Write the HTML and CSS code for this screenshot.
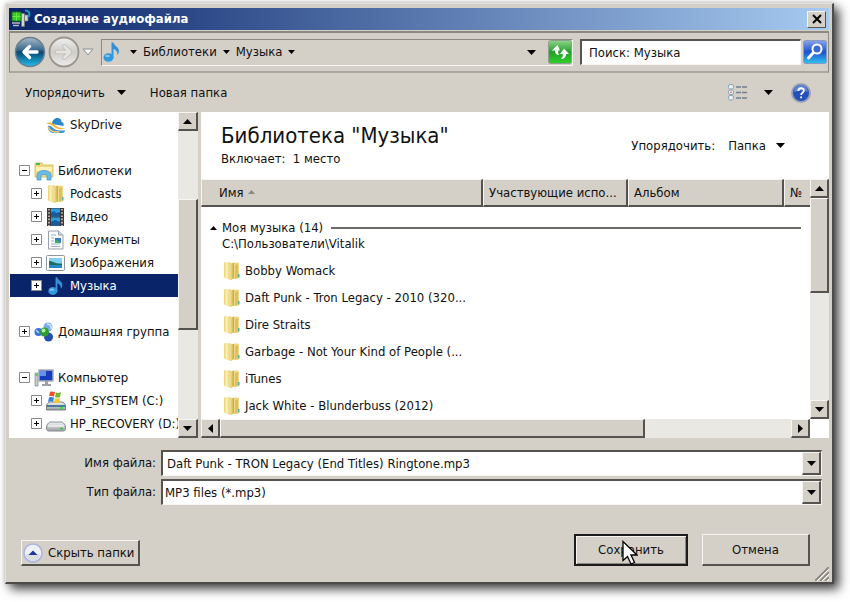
FILE: index.html
```html
<!DOCTYPE html>
<html lang="ru">
<head>
<meta charset="utf-8">
<meta name="viewport" content="width=device-width, initial-scale=1">
<title>Создание аудиофайла</title>
<link rel="stylesheet" href="styles.css">
</head>
<body>
<svg class="defs" aria-hidden="true">
  <defs>
    <linearGradient id="gold" x1="0" y1="0" x2="1" y2="0"><stop offset="0" stop-color="#e8d274"/><stop offset=".35" stop-color="#fbf0b4"/><stop offset="1" stop-color="#e6cd6c"/></linearGradient>
    <linearGradient id="goldFront" x1="0" y1="0" x2="1" y2="0"><stop offset="0" stop-color="#f6e69a"/><stop offset="1" stop-color="#c9a53e"/></linearGradient>
    <linearGradient id="note" x1="0" y1="0" x2="0" y2="1"><stop offset="0" stop-color="#3f86cc"/><stop offset="1" stop-color="#2aa0ea"/></linearGradient>
    <linearGradient id="backFill" x1="0" y1="0" x2="0" y2="1"><stop offset="0" stop-color="#a9bac8"/><stop offset=".42" stop-color="#3c6c90"/><stop offset=".5" stop-color="#0a4672"/><stop offset="1" stop-color="#20c0ee"/></linearGradient>
    <linearGradient id="fwdFill" x1="0" y1="0" x2="0" y2="1"><stop offset="0" stop-color="#efefed"/><stop offset=".5" stop-color="#cfcdc9"/><stop offset="1" stop-color="#eeedea"/></linearGradient>
    <linearGradient id="green" x1="0" y1="0" x2="0" y2="1"><stop offset="0" stop-color="#8fd48a"/><stop offset=".5" stop-color="#25a02c"/><stop offset="1" stop-color="#2fd02c"/></linearGradient>
    <linearGradient id="blue" x1="0" y1="0" x2="0" y2="1"><stop offset="0" stop-color="#8ba4ec"/><stop offset=".5" stop-color="#1d52cc"/><stop offset="1" stop-color="#30c4f4"/></linearGradient>
    <linearGradient id="metal" x1="0" y1="0" x2="0" y2="1"><stop offset="0" stop-color="#f4f4f4"/><stop offset="1" stop-color="#9a9fa3"/></linearGradient>
    <symbol id="i-folder" viewBox="0 0 18 20">
      <path d="M9 3.500c0-1.500 1-2 2-2h3.500c1 0 1.500.5 1.500 1.500v13c0 1.500-1 2-2 2H9z" fill="#efd986"/>
      <path d="M13.500 3c1 0 1.500.5 1.500 1.500V16l-3 2V5z" fill="#e0c05a"/>
      <path d="M1 3c0-1.500.5-2 2-2l5 .5V19l-5.500-1.500C1.500 17 1 16.500 1 15.500z" fill="url(#gold)"/>
      <path d="M7 4.500C7 3 8 2 9.500 2h1.500v14.500L8.500 19 7 18.500z" fill="url(#goldFront)"/>
      <path d="M15 13h1.500v3.500H15z" fill="#4bb6a2"/>
    </symbol>
    <symbol id="i-note" viewBox="0 0 20 22">
      <ellipse cx="6.500" cy="16.500" rx="5" ry="4.300" fill="url(#note)"/>
      <path d="M9.500 1.500h1.800c.5 3 5.700 4.500 5.700 8.500 0 1.800-.6 3-1.600 4 .2-3.500-1.400-5-3.900-6V17h-2z" fill="url(#note)"/>
      <ellipse cx="5.500" cy="15" rx="2.500" ry="1.300" fill="#7cc8f4"/>
    </symbol>
    <symbol id="i-plus" viewBox="0 0 11 11"><path d="M.5.5h10v10H.5z" fill="#fff" stroke="#8a8a8a"/><path d="M3 5.500h5M5.500 3v5" stroke="#000"/></symbol>
    <symbol id="i-minus" viewBox="0 0 11 11"><path d="M.5.5h10v10H.5z" fill="#fff" stroke="#8a8a8a"/><path d="M3 5.500h5" stroke="#000"/></symbol>
    <symbol id="i-down" viewBox="0 0 9 5"><path d="M0 0h9L4.500 5z"/></symbol>
    <symbol id="i-up" viewBox="0 0 9 5"><path d="M0 5h9L4.500 0z"/></symbol>
    <symbol id="i-left" viewBox="0 0 5 9"><path d="M5 0v9L0 4.500z"/></symbol>
    <symbol id="i-right" viewBox="0 0 5 9"><path d="M0 0v9l5-4.500z"/></symbol>
  </defs>
</svg>

<main class="window">
  <header class="titlebar">
    <svg class="app-icon" viewBox="0 0 20 20" aria-hidden="true"><path d="M1 3h9v9H1z" fill="#35d01f" stroke="#1b6d1a"/><path d="M5.500 3.500v8M1.500 7.500h8" stroke="#66ec48"/><path d="M1 14h8M2 16.500h6" stroke="#b8b8b8" stroke-width="1.600"/><path d="M10.500 4.500h3v13h-3zM13.500 6h3.500v6h-3.500z" fill="#d4d4d4" stroke="#777" stroke-width=".7"/><path d="M14 1.500c4 0 5.500 3 3.500 6.500" fill="none" stroke="#149ac0" stroke-width="2"/></svg>
    <h1>Создание аудиофайла</h1>
    <button class="close" type="button" aria-label="Закрыть"><svg viewBox="0 0 10 10"><path d="M1 1l8 8M9 1L1 9" stroke="#000" stroke-width="2"/></svg></button>
  </header>

  <nav class="navbar">
    <div class="travel">
      <button type="button" aria-label="Назад"><svg viewBox="0 0 32 32"><circle cx="16" cy="16" r="14.500" fill="url(#backFill)" stroke="#6d7f8e" stroke-width="1.500"/><path d="M23 16H10.500M15.500 10.500L10 16l5.500 5.500" fill="none" stroke="#fff" stroke-width="3.400" stroke-linecap="round" stroke-linejoin="round"/></svg></button>
      <button type="button" aria-label="Вперёд"><svg viewBox="0 0 32 32"><circle cx="16" cy="16" r="14.500" fill="url(#fwdFill)" stroke="#989690" stroke-width="1.800"/><g fill="none" stroke-linecap="round" stroke-linejoin="round"><path d="M9 16h12.500M16.500 10.500L22 16l-5.500 5.500" stroke="#bab8b3" stroke-width="4.400"/><path d="M9 16h12.500M16.500 10.500L22 16l-5.500 5.500" stroke="#e4e3df" stroke-width="3"/></g></svg></button>
      <button class="recent" type="button" aria-label="Последние страницы"><svg viewBox="0 0 12 8"><path d="M1 1h10L6 7z" fill="#f4f4f4" stroke="#8e8e98"/></svg></button>
    </div>
    <div class="address">
      <svg class="note" aria-hidden="true"><use href="#i-note"/></svg>
      <svg class="caret" aria-hidden="true"><use href="#i-down"/></svg>
      <a href="#libs">Библиотеки</a>
      <svg class="caret" aria-hidden="true"><use href="#i-down"/></svg>
      <a href="#music">Музыка</a>
      <svg class="caret" aria-hidden="true"><use href="#i-down"/></svg>
      <button class="history" type="button" aria-label="Предыдущие расположения"><svg class="caret-lg"><use href="#i-down"/></svg></button>
      <button class="square" type="button" aria-label="Обновить"><svg viewBox="0 0 24 24"><rect x=".5" y=".5" width="23" height="23" rx="2" fill="url(#green)" stroke="#8fa18c"/><path d="M9.500 5L4 10.500h3c0 3 1.500 4.500 4.500 4.500-1.500-1.500-1.500-3-1.300-4.500H12z" fill="#fff"/><path d="M16 8.500l5 5.500h-3c0 3.500-2 5-5 5 1.600-1.500 2-3 1.800-5H12z" fill="#fff"/></svg></button>
    </div>
    <form class="search">
      <input type="text" aria-label="Поиск" value="Поиск: Музыка">
      <button class="square" type="button" aria-label="Найти"><svg viewBox="0 0 24 24"><rect x=".5" y=".5" width="23" height="23" rx="2" fill="url(#blue)" stroke="#8b99bd"/><path d="M10.500 12.500L5.500 18" stroke="#fff" stroke-width="3" stroke-linecap="round"/><circle cx="14" cy="9" r="4.500" fill="#3a6bd4" stroke="#fff" stroke-width="2"/></svg></button>
    </form>
  </nav>

  <div class="toolbar">
    <button type="button">Упорядочить <svg class="caret-lg" aria-hidden="true"><use href="#i-down"/></svg></button>
    <button type="button">Новая папка</button>
    <button class="view" type="button" aria-label="Изменить представление"><svg class="view-icon" viewBox="0 0 20 17"><g fill="#e8eef2" stroke="#8fa5b3"><rect x=".5" y=".5" width="5" height="4.500" rx="1.500"/><rect x=".5" y="6" width="5" height="4.500" rx="1.500"/><rect x=".5" y="11.500" width="5" height="4.500" rx="1.500"/></g><path d="M2 8.200h2" stroke="#e44"/><path d="M8 3h5m1 0h5M8 8.500h5m1 0h5M8 14h5m1 0h5" stroke="#6f7f8d" stroke-width="1.400"/></svg><svg class="caret-lg"><use href="#i-down"/></svg></button>
    <button class="help" type="button" aria-label="Справка"><svg viewBox="0 0 20 20"><circle cx="10" cy="10" r="9" fill="#2450bc" stroke="#98a0b4" stroke-width="2"/><path d="M3 9a7 7 0 0 1 14 0c-4-2-9-2-14 0z" fill="#5f84da"/><path d="M7.300 8c0-3.600 5.600-3.600 5.600-.5 0 2.200-2.800 2.300-2.800 4.500" fill="none" stroke="#fff" stroke-width="1.800"/><path d="M9.200 13.500h1.800v1.800H9.200z" fill="#fff"/></svg></button>
  </div>

  <div class="panes">
    <aside class="sidebar">
      <ul class="tree">
        <li class="l2"><span class="toggle"></span><svg class="ico" viewBox="0 0 20 20"><path d="M6 9c0-4 3-6.500 6-6 2.500.3 3.500 2 3.500 4 2 .2 2.500 2 2 4z" fill="#2c86cc"/><path d="M0 8.500c2-1.500 5-1.500 7 0 3 2 6 5.500 12 4.500-2 2-6 1.500-8 .5C7 11.500 4 8.500 0 8.500z" fill="#f2b632"/><path d="M2 11c2-.5 3.500.5 5 2s4 2.500 7 2.500h5c0 1.500-1 2.500-3 2.500H7c-3 0-6-4-5-7z" fill="#3a92d6"/><path d="M2.500 12c1 4 5 5.500 11 5" stroke="#f6cf62" stroke-width="1.500" fill="none"/></svg>SkyDrive</li>
        <li class="gap"></li>
        <li class="l1" id="libs"><svg class="toggle"><use href="#i-minus"/></svg><svg class="ico" viewBox="0 0 20 20"><path d="M1 2h7l1 2h10v12H1z" fill="#f1d980" stroke="#dcc268"/><path d="M2 3h4" stroke="#4fb54f" stroke-width="2"/><path d="M2 6h16v4H2z" fill="#fbf0b8"/><path d="M3 19v-5c0-6 14-6 14 0v5h-4v-4c0-2-6-2-6 0v4z" fill="#6bbbe8" stroke="#4a9dd0" stroke-width=".8"/></svg>Библиотеки</li>
        <li class="l2"><svg class="toggle"><use href="#i-plus"/></svg><svg class="ico"><use href="#i-folder"/></svg>Podcasts</li>
        <li class="l2"><svg class="toggle"><use href="#i-plus"/></svg><svg class="ico" viewBox="0 0 20 20"><path d="M1 1h17v18H1z" fill="#3b3637"/><path d="M5 1.500h9v8H5zM5 10.500h9v8H5z" fill="#2b9de0"/><path d="M5 6l3-2 2 2 4-1v4.500H5zM5 15l4-2 5 2v3.500H5z" fill="#175b9a"/><path d="M3 2v17M16 2v17" stroke="#d6c9c0" stroke-width="1.600" stroke-dasharray="1.600 1.600"/></svg>Видео</li>
        <li class="l2"><svg class="toggle"><use href="#i-plus"/></svg><svg class="ico" viewBox="0 0 20 20"><path d="M2.500 1h10l4.500 4v14H2.500z" fill="#fafafa" stroke="#98a1aa"/><path d="M12.500 1v4H17" fill="#cfd8df" stroke="#98a1aa"/><path d="M5 5h5M5 8h3M5 11h3M5 14h9M5 16.500h9" stroke="#96b4d1"/><path d="M9 8h6v5H9z" fill="#3b78c4"/><path d="M9 13v-2l2-1 4 3z" fill="#3cb06a"/></svg>Документы</li>
        <li class="l2"><svg class="toggle"><use href="#i-plus"/></svg><svg class="ico" viewBox="0 0 20 20"><rect x=".5" y="2.500" width="18" height="15" rx="1" fill="#fff" stroke="#8d969c"/><path d="M3 5h13v10H3z" fill="#7fd0f2"/><path d="M3 8c4 0 6 3 13 2.500V12H3z" fill="#1f6c62"/><path d="M3 12h13v3H3z" fill="#2789c2"/></svg>Изображения</li>
        <li class="l2 selected" id="music"><svg class="toggle"><use href="#i-plus"/></svg><svg class="ico"><use href="#i-note"/></svg>Музыка</li>
        <li class="gap"></li>
        <li class="l1"><svg class="toggle"><use href="#i-plus"/></svg><svg class="ico" viewBox="0 0 20 20"><circle cx="4.500" cy="10" r="4" fill="#3472dc"/><circle cx="14" cy="5" r="4.500" fill="#78aef0"/><circle cx="14.500" cy="15" r="4.500" fill="#274fae"/><path d="M13 2c3 0 5 2 4 5" stroke="#d8ecff" stroke-width="1.500" fill="none"/><circle cx="10.500" cy="10" r="4.500" fill="#2f9c32"/><circle cx="9.500" cy="8.500" r="2" fill="#b4f0a0"/><path d="M2 8l3 3" stroke="#b8dafd" stroke-width="1.500"/></svg>Домашняя группа</li>
        <li class="gap"></li>
        <li class="l1"><svg class="toggle"><use href="#i-minus"/></svg><svg class="ico" viewBox="0 0 20 20"><path d="M1 5h3v13H1z" fill="#c7cbd0" stroke="#83888d" stroke-width=".7"/><path d="M1.500 7h2" stroke="#35c135" stroke-width="1.500"/><path d="M5 2h14v11H5z" fill="#153dbd" stroke="#a9afb8" stroke-width="1.500"/><path d="M6 3h6v5H6z" fill="#698fe8"/><path d="M11 13h3v3h3v2H8v-2h3z" fill="#9da2a7"/></svg>Компьютер</li>
        <li class="l2"><svg class="toggle"><use href="#i-plus"/></svg><svg class="ico" viewBox="0 0 20 20"><path d="M3 11h14l2.500 3v5H.5v-5z" fill="url(#metal)" stroke="#60676c" stroke-width=".8"/><path d="M1 14h18v2H1z" fill="#467b9d"/><path d="M14 17h3" stroke="#3fe043" stroke-width="2"/><path d="M4 1c2-1 3 0 5 0L8 5.500c-2 0-3-1-5 0z" fill="#ef5224"/><path d="M10 1.500c2 1 3 0 5-.3L14 6c-2 .5-3 1-5 0z" fill="#74b82c"/><path d="M3 6.500c2-1 3 0 5 0L7 11c-2-1-3-1-5 0z" fill="#2c83d8"/><path d="M9 7c2 1 3 .5 5 0l-1 4.500c-2 1-3 .5-5 0z" fill="#fac62c"/></svg>HP_SYSTEM (C:)</li>
        <li class="l2"><svg class="toggle"><use href="#i-plus"/></svg><svg class="ico" viewBox="0 0 20 20"><path d="M4 8h12c2 1 3.500 3 3.500 5v2c0 1-1 2-2 2h-15c-1 0-2-1-2-2v-2c0-2 1.500-4 3.500-5z" fill="url(#metal)" stroke="#868b90"/><path d="M2 12h16" stroke="#fff"/><path d="M14 14.500h3" stroke="#34c13a" stroke-width="1.500"/></svg>HP_RECOVERY (D:)</li>
      </ul>
      <div class="scroll vertical">
        <button type="button" aria-label="Вверх"><svg class="caret-lg"><use href="#i-up"/></svg></button>
        <div class="track tree-track"><span class="thumb"></span></div>
        <button type="button" aria-label="Вниз"><svg class="caret-lg"><use href="#i-down"/></svg></button>
      </div>
    </aside>

    <section class="content">
      <div class="library">
        <div>
          <h2>Библиотека "Музыка"</h2>
          <p>Включает:&nbsp; 1 место</p>
        </div>
        <div class="arrange"><span>Упорядочить:</span><button type="button">Папка <svg class="caret-lg" aria-hidden="true"><use href="#i-down"/></svg></button></div>
      </div>
      <div class="listing">
        <table class="files">
          <colgroup><col class="c-name"><col class="c-artist"><col class="c-album"><col></colgroup>
          <thead><tr><th scope="col">Имя <svg class="sort" aria-hidden="true"><use href="#i-up"/></svg></th><th scope="col">Участвующие испо...</th><th scope="col">Альбом</th><th scope="col">№</th></tr></thead>
          <tbody>
            <tr class="group"><td colspan="4"><div class="group-head"><svg class="mini" aria-hidden="true"><use href="#i-up"/></svg><span>Моя музыка (14)</span><i></i></div><p>C:\Пользователи\Vitalik</p></td></tr>
            <tr><td colspan="4"><div class="file"><svg><use href="#i-folder"/></svg>Bobby Womack</div></td></tr>
            <tr><td colspan="4"><div class="file"><svg><use href="#i-folder"/></svg>Daft Punk - Tron Legacy - 2010 (320...</div></td></tr>
            <tr><td colspan="4"><div class="file"><svg><use href="#i-folder"/></svg>Dire Straits</div></td></tr>
            <tr><td colspan="4"><div class="file"><svg><use href="#i-folder"/></svg>Garbage - Not Your Kind of People (...</div></td></tr>
            <tr><td colspan="4"><div class="file"><svg><use href="#i-folder"/></svg>iTunes</div></td></tr>
            <tr><td colspan="4"><div class="file"><svg><use href="#i-folder"/></svg>Jack White - Blunderbuss (2012)</div></td></tr>
          </tbody>
        </table>
        <div class="scroll vertical">
          <button type="button" aria-label="Вверх"><svg class="caret-lg"><use href="#i-up"/></svg></button>
          <div class="track list-track"><span class="thumb"></span></div>
          <button type="button" aria-label="Вниз"><svg class="caret-lg"><use href="#i-down"/></svg></button>
        </div>
        <div class="scroll horizontal">
          <button type="button" aria-label="Влево"><svg class="caret-side"><use href="#i-left"/></svg></button>
          <div class="track wide-track"><span class="thumb"></span></div>
          <button type="button" aria-label="Вправо"><svg class="caret-side"><use href="#i-right"/></svg></button>
        </div>
      </div>
    </section>
  </div>

  <form class="fields">
    <label for="fname">Имя файла:</label>
    <div class="combo"><input id="fname" type="text" value="Daft Punk - TRON Legacy (End Titles) Ringtone.mp3"><span class="drop"><svg class="caret-lg"><use href="#i-down"/></svg></span></div>
    <label for="ftype">Тип файла:</label>
    <div class="combo"><select id="ftype"><option>MP3 files (*.mp3)</option></select><span class="drop"><svg class="caret-lg"><use href="#i-down"/></svg></span></div>
  </form>

  <footer class="actions">
    <button class="hide" type="button"><svg viewBox="0 0 20 20" aria-hidden="true"><circle cx="10" cy="10" r="9" fill="#eef0f4" stroke="#a9b5dc" stroke-width="1.500"/><path d="M3 11h14a7 7 0 0 1-14 0z" fill="#dcdde0"/><path d="M5.500 12h9L10 7.500z" fill="#1c3a94"/></svg>Скрыть папки</button>
    <button class="save" type="button">Сохранить<svg class="pointer" viewBox="0 0 16 25" aria-hidden="true"><path d="M1 1.500v19l4.500-4 3.500 7.500 3.500-1.500-3.500-7.500h6z" fill="#fff" stroke="#000" stroke-width="1.300"/></svg></button>
    <button class="cancel" type="button">Отмена</button>
    <svg class="grip" viewBox="0 0 14 14" aria-hidden="true"><path d="M0 14L14 0M5 14l9-9M10 14l4-4" stroke="#858178" stroke-width="1.600"/><path d="M2 14L14 2M7 14l7-7M12 14l2-2" stroke="#fff"/></svg>
  </footer>
</main>
</body>
</html>
```
FILE: styles.css
```css
:root {
  --face: #d4d0c8;
  --dark: #55534f;
  --shade: #8c8983;
  --light: #f6f5f2;
  --track: #e9e8e3;
}
* { box-sizing: border-box; }
body {
  margin: 0;
  padding: 3px 16px 18px 5px;
  background: #fff;
  color: #111;
  font: 13px/16px "DejaVu Sans Condensed", "DejaVu Sans", sans-serif;
  font-stretch: condensed;
}
h1, h2, p, ul { margin: 0; padding: 0; font-weight: normal; }
button, input, select { font: inherit; color: inherit; margin: 0; border-radius: 0; }
button { padding: 0; border: 0; background: none; }
svg { display: block; flex: none; }
a { color: inherit; text-decoration: none; }
.defs { position: absolute; width: 0; height: 0; }
.caret { width: 7px; height: 4px; }
.caret-lg { width: 9px; height: 5px; }
.caret-side { width: 5px; height: 9px; }

.window {
  padding: 4px 3px 0;
  background: var(--face);
  border: 1px solid #e4e1db;
  border-right: 2px solid #4c4b49;
  border-bottom: 2px solid #4c4b49;
  box-shadow: 5px 5px 10px rgba(0, 0, 0, .75), 0 0 4px rgba(0, 0, 0, .15);
}

.titlebar {
  display: flex;
  align-items: center;
  gap: 3px;
  height: 22px;
  padding: 0 3px 0 2px;
  background: linear-gradient(to right, #0a246a, #a6caf0);
  color: #fff;
}
.titlebar h1 { flex: 1; font-size: 13px; font-weight: bold; }
.app-icon { width: 20px; height: 20px; }
.close {
  display: grid;
  place-items: center;
  width: 19px;
  height: 17px;
  background: var(--face);
  border: 1px solid var(--light);
  border-right-color: var(--dark);
  border-bottom-color: var(--dark);
}
.close svg { width: 10px; height: 10px; }

.navbar {
  display: flex;
  align-items: center;
  gap: 7px;
  height: 42px;
  margin-top: 1px;
  padding: 0 1px 0 4px;
  border: 1px solid var(--shade);
  border-width: 2px 1px 2px 1px;
  border-bottom-color: #aaa7a0;
}
.travel { display: flex; align-items: center; gap: 2px; }
.travel button svg { width: 32px; height: 32px; }
.travel .recent svg { width: 12px; height: 8px; }
.address {
  display: flex;
  align-items: center;
  gap: 6px;
  flex: 1;
  height: 27px;
  border: 1px solid var(--shade);
  border-right-color: var(--light);
  border-bottom-color: var(--light);
}
.note { width: 20px; height: 22px; margin-right: 2px; }
.history { margin-left: auto; padding: 6px; }
.square svg { width: 24px; height: 24px; }
.search { display: flex; align-items: center; gap: 2px; flex: 0 0 247px; }
.search input {
  flex: 1;
  min-width: 0;
  height: 26px;
  padding: 0 7px;
  background: #fff;
  border: 2px solid var(--dark);
  border-right: 1px solid var(--light);
  border-bottom: 1px solid var(--light);
}

.toolbar { display: flex; align-items: center; height: 39px; padding: 0 18px 0 16px; }
.toolbar button { display: flex; align-items: center; gap: 12px; margin-right: 24px; }
.toolbar .view { gap: 16px; margin-left: auto; margin-right: 18px; }
.toolbar .help { margin-right: 0; }
.view-icon { width: 20px; height: 17px; }
.help svg { width: 20px; height: 20px; }

.panes { display: flex; gap: 3px; }
.sidebar { display: flex; flex: 0 0 189px; min-width: 0; background: #fff; }
.tree { flex: 1; min-width: 0; padding-top: 1px; list-style: none; overflow: hidden; }
.tree li { display: flex; align-items: center; height: 23px; margin-left: 1px; white-space: nowrap; }
.tree .l1 { padding-left: 9px; }
.tree .l2 { padding-left: 21px; }
.tree .selected { background: #0a246a; color: #fff; }
.toggle { width: 11px; height: 11px; flex: none; margin-right: 4px; }
.ico { width: 20px; height: 20px; margin-right: 4px; }

.scroll { display: flex; background: var(--track); }
.scroll button, .thumb {
  background: var(--face);
  border: 1px solid var(--light);
  border-right: 2px solid var(--dark);
  border-bottom: 2px solid var(--dark);
}
.scroll button { display: grid; place-items: center; flex: 0 0 19px; }
.vertical { flex: 0 0 20px; flex-direction: column; }
.track { display: flex; flex: 1; }
.vertical .track { flex-direction: column; }
.tree-track::before { content: ""; flex: 69; }
.tree-track .thumb { flex: 129; }
.tree-track::after { content: ""; flex: 90; }
.list-track .thumb { flex: 93; }
.list-track::after { content: ""; flex: 109; }
.wide-track .thumb { flex: 424; }
.wide-track::after { content: ""; flex: 147; }

.content { flex: 1; min-width: 0; background: #fff; }
.library { display: flex; align-items: center; justify-content: space-between; height: 67px; padding: 0 44px 0 20px; }
.library h2 { font-size: 22px; line-height: 26px; }
.library p { line-height: 20px; }
.arrange { display: flex; gap: 13px; }
.arrange button { display: flex; align-items: center; gap: 10px; }
.listing { display: grid; grid-template-columns: minmax(0, 1fr) 19px; grid-template-rows: auto 19px; }
.files { width: 100%; table-layout: fixed; border-collapse: separate; border-spacing: 0; align-self: start; }
.c-name { width: 282px; }
.c-artist { width: 145px; }
.c-album { width: 156px; }
.files th {
  height: 28px;
  padding: 0 0 0 5px;
  text-align: left;
  font-weight: normal;
  white-space: nowrap;
  overflow: hidden;
  background: var(--face);
  border-top: 1px solid var(--light);
  border-left: 1px solid var(--light);
  border-right: 2px solid var(--dark);
  border-bottom: 2px solid var(--dark);
}
.files th:first-child { padding-left: 17px; }
.files th:last-child { border-right: 0; }
.sort { display: inline-block; width: 7px; height: 4px; margin-left: 1px; vertical-align: 3px; fill: #8c8983; }
.files td { padding: 0; }
.group td { height: 50px; padding: 12px 9px 5px; vertical-align: top; }
.group-head { display: flex; align-items: center; gap: 5px; height: 17px; }
.group-head i { flex: 1; height: 2px; margin-left: 3px; background: #6c6a67; }
.group p { padding-left: 12px; }
.mini { width: 7px; height: 4px; }
.file { display: flex; align-items: center; gap: 4px; height: 27px; padding-left: 22px; }
.file svg { width: 18px; height: 20px; }

.fields {
  display: grid;
  grid-template-columns: 147px minmax(0, 1fr);
  gap: 3px 5px;
  align-items: center;
  padding: 12px 7px 0 0;
}
.fields label { text-align: right; }
.combo {
  position: relative;
  height: 26px;
  background: #fff;
  border: 2px solid var(--dark);
  border-right: 1px solid var(--light);
  border-bottom: 1px solid var(--light);
}
.combo input, .combo select { width: 100%; height: 100%; padding: 0 24px 0 4px; border: 0; background: none; appearance: none; }
.combo select { padding-left: 2px; }
.drop {
  position: absolute;
  top: 0;
  right: 0;
  bottom: 0;
  display: grid;
  place-items: center;
  width: 19px;
  background: var(--face);
  border: 1px solid var(--light);
  border-right: 2px solid var(--dark);
  border-bottom: 2px solid var(--dark);
  pointer-events: none;
}

.actions { display: flex; align-items: flex-end; margin-top: 29px; padding-left: 12px; }
.actions button {
  border: 1px solid var(--light);
  border-right: 2px solid var(--dark);
  border-bottom: 2px solid var(--dark);
}
.actions .hide { display: flex; align-items: center; gap: 5px; height: 26px; margin: 0 auto 16px 0; padding: 0 4px 0 1px; }
.hide svg { width: 20px; height: 20px; }
.actions .save, .actions .cancel { height: 32px; margin-bottom: 16px; }
.actions .save { position: relative; width: 114px; margin-right: 14px; border: 2px solid #1c1c1c; box-shadow: inset 1px 1px var(--light), inset -1px -1px var(--shade); }
.actions .cancel { width: 108px; margin-right: 5px; }
.pointer { position: absolute; left: 46px; top: 4px; width: 16px; height: 25px; }
.grip { width: 14px; height: 14px; margin-bottom: 1px; }
```
